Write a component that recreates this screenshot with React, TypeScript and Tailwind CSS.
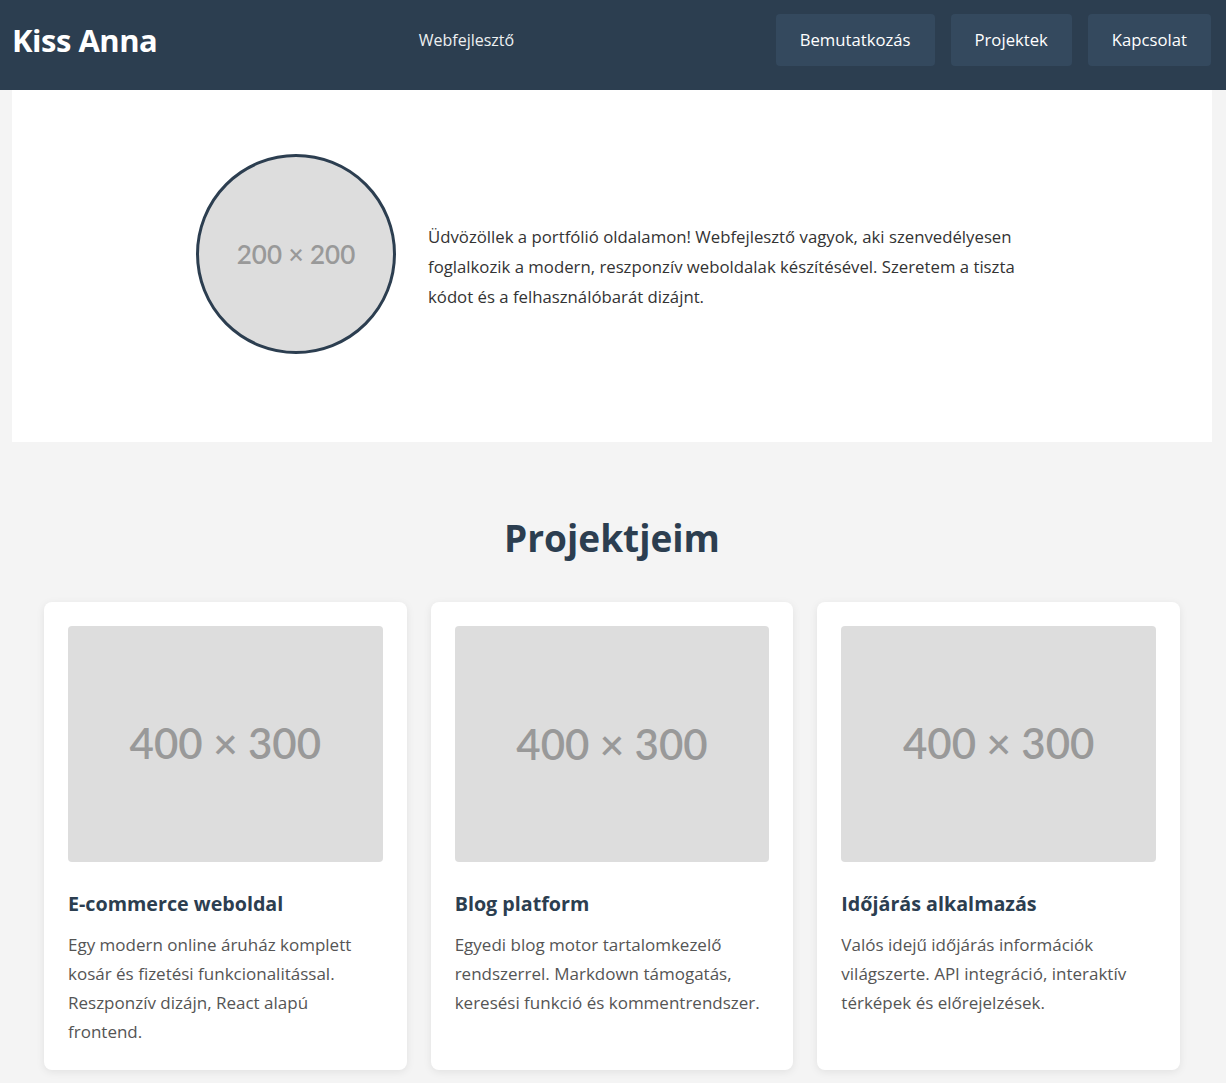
import React from "react";

const font = { fontFamily: '"Open Sans", "Noto Sans", sans-serif' };

function Placeholder({ label, className }: { label: string; className: string }) {
  return (
    <div className={"flex items-center justify-center bg-[#dddddd] text-[#999999] font-semibold " + className} style={{ fontFamily: 'Lato, "Liberation Sans", sans-serif' }}>
      {label}
    </div>
  );
}

const projects = [
  {
    title: "E-commerce weboldal",
    desc: "Egy modern online áruház komplett kosár és fizetési funkcionalitással. Reszponzív dizájn, React alapú frontend.",
  },
  {
    title: "Blog platform",
    desc: "Egyedi blog motor tartalomkezelő rendszerrel. Markdown támogatás, keresési funkció és kommentrendszer.",
  },
  {
    title: "Időjárás alkalmazás",
    desc: "Valós idejű időjárás információk világszerte. API integráció, interaktív térképek és előrejelzések.",
  },
];

export default function App() {
  return (
    <div className="min-h-screen bg-[#f4f4f4] text-[#333333]" style={font}>
      <header className="flex h-[90px] items-center justify-between bg-[#2c3e50] pb-[10px] pl-3 pr-[15px] text-white">
        <h1 className="text-[31px] font-bold tracking-[-0.5px]">Kiss Anna</h1>
        <p className="text-[16px] text-[#ecf0f1]">Webfejlesztő</p>
        <nav className="flex gap-4">
          {["Bemutatkozás", "Projektek", "Kapcsolat"].map((n) => (
            <a key={n} className="flex h-[52px] items-center rounded bg-[#34495e] px-6 text-[16.7px] text-white">
              {n}
            </a>
          ))}
        </nav>
      </header>

      <section className="ml-3 mr-[14px] flex items-start justify-center gap-8 bg-white pb-[88px] pt-16">
        <Placeholder label="200 × 200" className="h-[200px] w-[200px] shrink-0 rounded-full border-[3px] border-[#2c3e50] text-[26px]" />
        <p className="mt-[68px] w-[600px] text-[16.75px] leading-[30px] text-[#333333]">
          Üdvözöllek a portfólió oldalamon! Webfejlesztő vagyok, aki szenvedélyesen foglalkozik a modern, reszponzív weboldalak készítésével. Szeretem a tiszta kódot és a felhasználóbarát dizájnt.
        </p>
      </section>

      <section className="ml-3 mr-[14px] px-8 pb-8 pt-[72px]">
        <h2 className="mb-[40px] text-center text-[37px] font-bold leading-[48px] text-[#2c3e50]">Projektjeim</h2>
        <div className="grid grid-cols-3 gap-6">
          {projects.map((p) => (
            <div key={p.title} className="rounded-lg bg-white p-6 shadow-[0_2px_8px_rgba(0,0,0,0.08)]">
              <Placeholder label="400 × 300" className="aspect-[4/3] w-full rounded text-[42px]" />
              <h3 className="mt-[28px] text-[19.7px] font-bold leading-[28px] text-[#2c3e50]">{p.title}</h3>
              <p className="mt-[12px] text-[17px] leading-[29px] text-[#555555]">{p.desc}</p>
            </div>
          ))}
        </div>
      </section>
    </div>
  );
}
